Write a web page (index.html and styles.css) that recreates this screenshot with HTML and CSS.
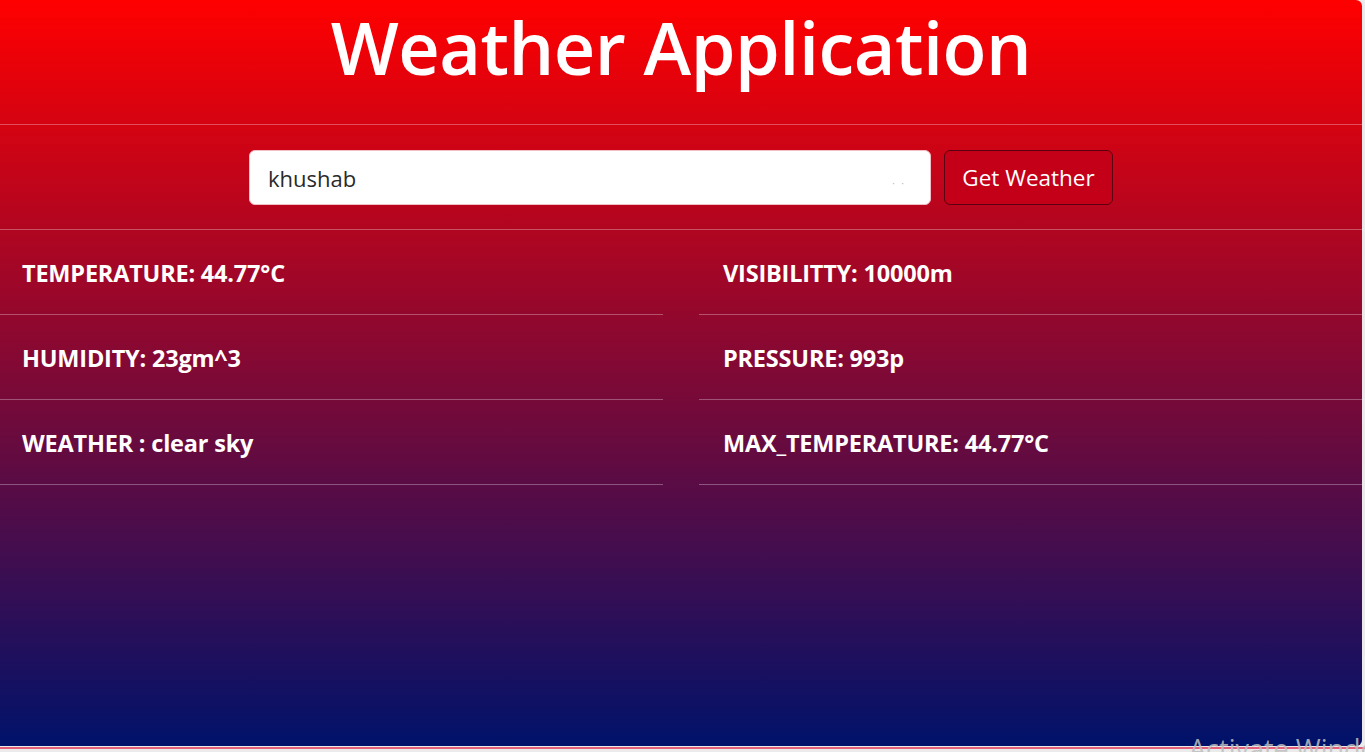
FILE: index.html
```html
<!DOCTYPE html>
<html lang="en">
<head>
<meta charset="utf-8">
<title>Weather Application</title>
<link rel="stylesheet" href="styles.css">
</head>
<body>
<div class="app">
  <header class="header">
    <h1 class="title">Weather Application</h1>
  </header>
  <section class="search">
    <div class="search-box">
      <span class="search-text">khushab</span>
      <span class="search-dots">· ·</span>
    </div>
    <button class="btn">Get Weather</button>
  </section>
  <section class="grid">
    <div class="col col-left">
      <div class="row">TEMPERATURE: 44.77°C</div>
      <div class="row">HUMIDITY: 23gm^3</div>
      <div class="row">WEATHER : clear sky</div>
    </div>
    <div class="col col-right">
      <div class="row">VISIBILITTY: 10000m</div>
      <div class="row">PRESSURE: 993p</div>
      <div class="row">MAX_TEMPERATURE: 44.77°C</div>
    </div>
  </section>
</div>
<div class="edge"></div>
<div class="watermark">Activate Windows</div>
</body>
</html>
```
FILE: styles.css
```css
* { box-sizing: border-box; }
html, body { margin: 0; padding: 0; }
body {
  width: 1365px;
  height: 752px;
  overflow: hidden;
  background: #ebebeb;
  font-family: "Open Sans", "Noto Sans", sans-serif;
  position: relative;
}
.app {
  width: 1362px;
  height: 746px;
  background: linear-gradient(to bottom, #ff0000 0%, #00126a 100%);
  border-radius: 0 6px 6px 0;
  color: #fff;
  display: flex;
  flex-direction: column;
}
.header {
  height: 125px;
  border-bottom: 1px solid rgba(255,255,255,0.3);
  display: flex;
  justify-content: center;
}
.title {
  margin: 0;
  font-size: 72px;
  font-weight: 600;
  line-height: 94px;
  letter-spacing: -0.5px;
}
.search {
  height: 105px;
  border-bottom: 1px solid rgba(255,255,255,0.3);
  display: flex;
  justify-content: center;
  align-items: center;
  gap: 13px;
  padding-top: 1px;
}
.search-box {
  width: 682px;
  height: 55px;
  background: #fff;
  border: 1px solid #f0c0c6;
  border-radius: 6px;
  display: flex;
  align-items: center;
  justify-content: space-between;
  padding: 0 24px 0 18px;
}
.search-text {
  color: #2a2a2a;
  font-size: 22px;
}
.search-dots {
  color: #bbb;
  font-size: 10px;
  letter-spacing: 2px;
  padding-top: 10px;
}
.btn {
  width: 169px;
  height: 55px;
  background: #c30018;
  border: 1px solid #5a0010;
  border-radius: 6px;
  color: #fff;
  font-family: inherit;
  font-size: 22.5px;
  padding: 0;
}
.grid {
  display: flex;
  justify-content: space-between;
}
.col { display: flex; flex-direction: column; }
.col-left { width: 663px; }
.col-right { width: 663px; }
.row {
  height: 85px;
  border-bottom: 1px solid rgba(255,255,255,0.3);
  display: flex;
  align-items: center;
  font-size: 23.5px;
  font-weight: 700;
  letter-spacing: -0.2px;
  padding-top: 2px;
}
.col-left .row { padding-left: 22px; }
.col-right .row { padding-left: 24px; }
.edge {
  width: 1365px;
  height: 2px;
  margin-top: 1px;
  background: #e4607a;
}
.watermark {
  position: absolute;
  left: 1189px;
  top: 730px;
  font-family: "Open Sans", sans-serif;
  font-size: 27px;
  color: rgba(190,190,190,0.85);
  white-space: nowrap;
}
```
